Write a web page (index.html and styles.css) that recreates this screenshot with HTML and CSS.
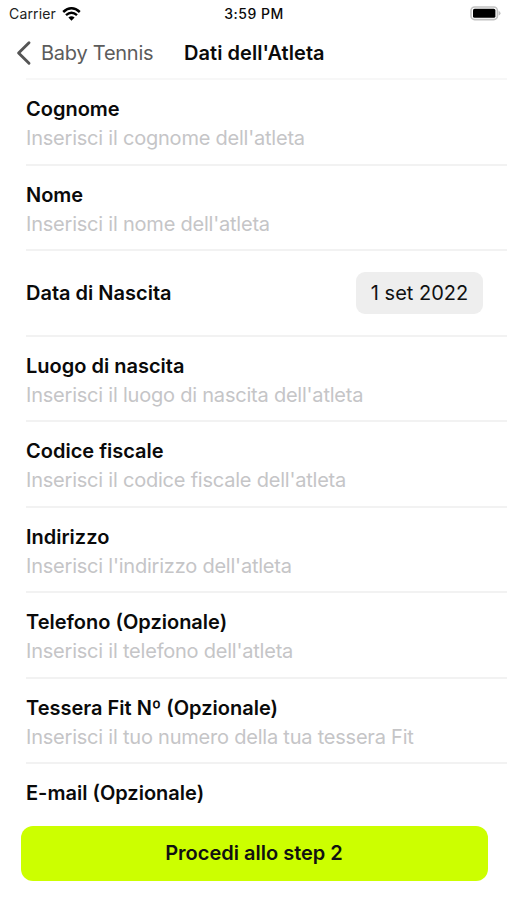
FILE: index.html
```
<!DOCTYPE html>
<html lang="it">
<head>
    <meta charset="UTF-8">
    <meta name="viewport" content="width=device-width, initial-scale=1.0">
    <title>Dati dell'Atleta</title>
    <link rel="stylesheet" href="styles.css">
</head>
<body>
    <div class="status-bar">
        <div class="carrier">
            <span class="carrier-name">Carrier</span>
            <svg class="wifi" width="19" height="14" viewBox="0 0 19 14">
                <path d="M1.2 5 Q9.5 -2.4 17.8 5" fill="none" stroke="#000" stroke-width="2.5"/>
                <path d="M4 8.2 Q9.5 3.2 15 8.2" fill="none" stroke="#000" stroke-width="2.4"/>
                <path d="M6.4 10.6 Q9.5 7.8 12.6 10.6 L9.5 13.7 Z" fill="#000"/>
            </svg>
        </div>
        <span class="time">3:59 PM</span>
        <svg class="battery" width="31" height="15" viewBox="0 0 31 15">
            <rect x="1" y="1" width="26.4" height="12.6" rx="3.6" fill="#fff" stroke="#c2c2c2" stroke-width="1.6"/>
            <rect x="3" y="2.8" width="22.4" height="9" rx="1.6" fill="#000"/>
            <path d="M28.6 5 Q30.5 5.6 30.5 7.3 Q30.5 9 28.6 9.6 Z" fill="#c2c2c2"/>
        </svg>
    </div>

    <header class="nav-bar">
        <a class="back" href="#">
            <svg class="chevron" width="16" height="26" viewBox="0 0 16 26">
                <path d="M13 2.8 L2.6 13 L13 23.2" fill="none" stroke="#555" stroke-width="2.9" stroke-linecap="round" stroke-linejoin="round"/>
            </svg>
            <span class="back-label">Baby Tennis</span>
        </a>
        <h1>Dati dell'Atleta</h1>
    </header>

    <form class="athlete-form" id="athleteForm">
        <div class="form-group first">
            <label for="cognome">Cognome</label>
            <input type="text" id="cognome" placeholder="Inserisci il cognome dell'atleta">
        </div>
        <div class="form-group">
            <label for="nome">Nome</label>
            <input type="text" id="nome" placeholder="Inserisci il nome dell'atleta">
        </div>
        <div class="form-group date-group">
            <label for="nascita">Data di Nascita</label>
            <button type="button" class="date" id="nascita">1 set 2022</button>
        </div>
        <div class="form-group">
            <label for="luogo">Luogo di nascita</label>
            <input type="text" id="luogo" placeholder="Inserisci il luogo di nascita dell'atleta">
        </div>
        <div class="form-group">
            <label for="codice">Codice fiscale</label>
            <input type="text" id="codice" placeholder="Inserisci il codice fiscale dell'atleta">
        </div>
        <div class="form-group">
            <label for="indirizzo">Indirizzo</label>
            <input type="text" id="indirizzo" placeholder="Inserisci l'indirizzo dell'atleta">
        </div>
        <div class="form-group">
            <label for="telefono">Telefono (Opzionale)</label>
            <input type="text" id="telefono" placeholder="Inserisci il telefono dell'atleta">
        </div>
        <div class="form-group">
            <label for="tessera">Tessera Fit Nº (Opzionale)</label>
            <input type="text" id="tessera" placeholder="Inserisci il tuo numero della tua tessera Fit">
        </div>
        <div class="form-group last">
            <label for="email">E-mail (Opzionale)</label>
        </div>
        <button type="submit" class="btn">Procedi allo step 2</button>
    </form>
</body>
</html>
```
FILE: styles.css
```
* { box-sizing: border-box; }
body { margin: 0; height: 900px; overflow: hidden; background-color: #fff; color: #0a0a0a; font-family: Inter, sans-serif; }
button, input { font-family: inherit; border: none; }

.status-bar { display: grid; grid-template-columns: 1fr auto 1fr; align-items: center; height: 27px; padding: 0 6px 0 9px; font-size: 14px; }
.carrier { display: flex; align-items: center; gap: 6px; color: #222; letter-spacing: 0.15px; }
.time { margin-right: 2px; font-weight: 500; letter-spacing: 0.5px; }
.battery { justify-self: end; }

.nav-bar { display: flex; align-items: center; height: 51px; padding-left: 16px; }
.back { display: flex; align-items: center; gap: 9px; width: 168px; color: #5c5c5c; font-size: 20px; letter-spacing: -0.25px; text-decoration: none; white-space: nowrap; }
h1 { margin: 0; font-size: 20px; font-weight: 600; letter-spacing: 0.05px; white-space: nowrap; }

.athlete-form { padding-left: 26px; }
.form-group { height: 85.5px; padding-top: 17px; border-top: 2px solid #f2f2f2; }
.first { border-top-color: #f7f7f7; }
label { display: block; height: 24px; line-height: 24px; font-size: 20px; font-weight: 600; white-space: nowrap; }
input { display: block; width: 100%; height: 26px; margin-top: 4px; padding: 0; background: none; font-size: 20px; letter-spacing: -0.22px; }
input::placeholder { color: #c5c5c7; opacity: 1; }
.date-group { display: flex; align-items: center; justify-content: space-between; padding: 0 24px 0 0; }
.date { width: 127px; height: 42px; padding: 0; border-radius: 9px; background-color: #eee; color: #111; font-size: 20px; white-space: nowrap; }
.last { height: 63.5px; }
.btn { display: block; width: 467px; height: 55px; margin-left: -5.5px; padding: 0; border-radius: 12px; background-color: #cf0; color: #111; font-size: 20px; font-weight: 600; }
```
